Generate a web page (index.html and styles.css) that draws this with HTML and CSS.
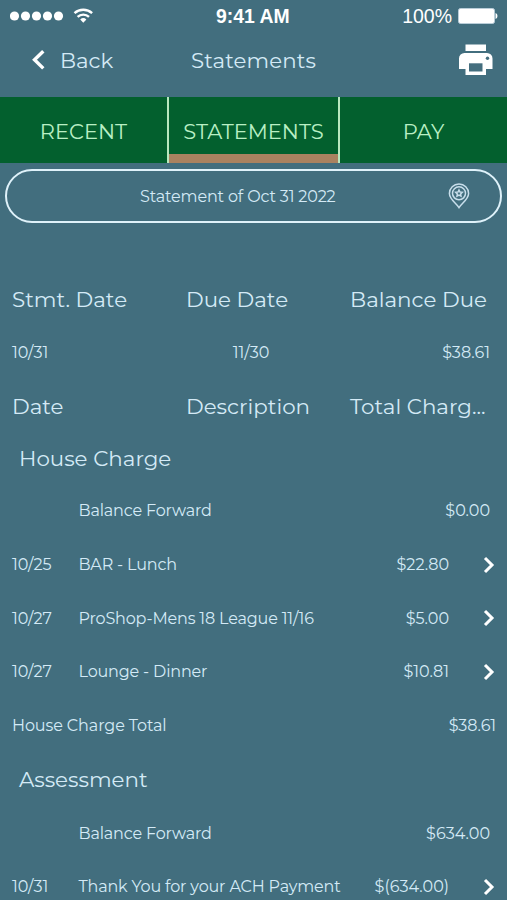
FILE: index.html
```html
<!DOCTYPE html>
<html lang="en">
<head>
  <meta charset="UTF-8">
  <meta name="viewport" content="width=device-width, initial-scale=1.0">
  <title>Statements</title>
  <link rel="stylesheet" href="styles.css">
</head>
<body>

  <div class="status-bar">
    <div class="signal">
      <svg width="86" height="16" viewBox="0 0 86 16" fill="#fff">
        <circle cx="4.5" cy="8" r="4.6"/>
        <circle cx="15.5" cy="8" r="4.6"/>
        <circle cx="26.5" cy="8" r="4.6"/>
        <circle cx="37.5" cy="8" r="4.6"/>
        <circle cx="48.5" cy="8" r="4.6"/>
        <g fill="none" stroke="#fff" stroke-width="2.4">
          <path d="M64.5 5.2a13 13 0 0 1 17.6 0"/>
          <path d="M67.6 8.9a8.2 8.2 0 0 1 11.4 0"/>
        </g>
        <path d="M70.2 11.4a4.6 4.6 0 0 1 6.2 0L73.3 14.8z"/>
      </svg>
    </div>
    <div class="clock">9:41 AM</div>
    <div class="battery">
      <span>100%</span>
      <svg width="40" height="16" viewBox="0 0 40 16">
        <rect x="0.5" y="0.5" width="36" height="15" rx="2" fill="#fff" stroke="#b9cdd8"/>
        <path d="M37.5 5q2 .6 2 3t-2 3z" fill="#fff"/>
      </svg>
    </div>
  </div>

  <div class="nav-bar">
    <a class="back">
      <svg width="14" height="22" viewBox="0 0 14 22" fill="none" stroke="#fff" stroke-width="3.4"><path d="M12.300 2.200L3.500 10.800l8.800 8.600"/></svg>
      <span>Back</span>
    </a>
    <h1 class="title">Statements</h1>
    <svg class="print" width="36" height="32" viewBox="0 0 36 32">
      <rect x="7.500" y="0.500" width="20.500" height="6.500" fill="#fff"/>
      <path d="M6.500 9h22.500a5.500 5.500 0 0 1 5.500 5.500V25h-6.500v6H7.500v-6H1V14.500A5.500 5.500 0 0 1 6.500 9z" fill="#fff"/>
      <path d="M11 19.300h13.500v8.200H11z" fill="#446e7e"/>
      <circle cx="29.500" cy="14.200" r="1.700" fill="#446e7e"/>
    </svg>
  </div>

  <div class="tabs">
    <div class="tab">RECENT</div>
    <div class="tab active">STATEMENTS</div>
    <div class="tab">PAY</div>
  </div>

  <div class="picker">
    <span>Statement of Oct 31 2022</span>
    <svg width="22" height="26" viewBox="0 0 22 26" fill="none" stroke="#c8deeb" stroke-width="1.5">
      <path d="M11 24.600C8.500 20.500 1.400 16.200 1.400 10.500a9.600 9.600 0 0 1 19.200 0C20.600 16.200 13.500 20.500 11 24.600z"/>
      <circle cx="11" cy="10.300" r="6.500"/>
      <path d="M11 7l1 2 2.300.3-1.700 1.600.4 2.300-2-1.100-2 1.100.4-2.300-1.700-1.600 2.300-.3z"/>
    </svg>
  </div>

  <div class="statement">
    <div class="row head">
      <span>Stmt. Date</span>
      <span>Due Date</span>
      <span>Balance Due</span>
    </div>
    <div class="row summary">
      <span>10/31</span>
      <span class="due">11/30</span>
      <span class="amount">$38.61</span>
    </div>
    <div class="row head">
      <span>Date</span>
      <span>Description</span>
      <span>Total Charg...</span>
    </div>

    <h2 class="section first">House Charge</h2>
    <div class="row item">
      <span class="desc">Balance Forward</span>
      <span class="amount">$0.00</span>
    </div>
    <div class="row item link">
      <span>10/25</span>
      <span class="desc">BAR - Lunch</span>
      <span class="amount">$22.80</span>
      <svg class="arrow" width="12" height="18" viewBox="0 0 12 18"><path d="M2 2l7 7-7 7"/></svg>
    </div>
    <div class="row item link">
      <span>10/27</span>
      <span class="desc">ProShop-Mens 18 League 11/16</span>
      <span class="amount">$5.00</span>
      <svg class="arrow" width="12" height="18" viewBox="0 0 12 18"><path d="M2 2l7 7-7 7"/></svg>
    </div>
    <div class="row item link">
      <span>10/27</span>
      <span class="desc">Lounge - Dinner</span>
      <span class="amount">$10.81</span>
      <svg class="arrow" width="12" height="18" viewBox="0 0 12 18"><path d="M2 2l7 7-7 7"/></svg>
    </div>
    <div class="row total">
      <span>House Charge Total</span>
      <span>$38.61</span>
    </div>

    <h2 class="section">Assessment</h2>
    <div class="row item">
      <span class="desc">Balance Forward</span>
      <span class="amount">$634.00</span>
    </div>
    <div class="row item link">
      <span>10/31</span>
      <span class="desc">Thank You for your ACH Payment</span>
      <span class="amount">$(634.00)</span>
      <svg class="arrow" width="12" height="18" viewBox="0 0 12 18"><path d="M2 2l7 7-7 7"/></svg>
    </div>
  </div>

</body>
</html>
```
FILE: styles.css
```css
* {
  box-sizing: border-box;
}
body {
  margin: 0;
  height: 900px;
  overflow: hidden;
  background-color: #426e7e;
  color: #d4eaf6;
  font-family: Montserrat, Inter, sans-serif;
  font-size: 16px;
}
svg {
  display: block;
  flex: none;
}
h1, h2 {
  margin: 0;
  font-weight: 400;
}
.status-bar {
  display: grid;
  grid-template-columns: 1fr 76px 1fr;
  align-items: center;
  height: 32px;
  padding: 0 9px 0 10px;
  color: #fff;
  font-family: "Liberation Sans", Arial, sans-serif;
  font-size: 19.5px;
}
.clock {
  font-size: 19.4px;
  font-weight: bold;
  white-space: nowrap;
}
.battery {
  display: flex;
  align-items: center;
  justify-content: flex-end;
  gap: 6px;
}
.nav-bar {
  display: grid;
  grid-template-columns: 160px 1fr 36px;
  align-items: center;
  height: 65px;
  padding: 0 13px 9px 31px;
  font-size: 21.3px;
}
.back {
  display: flex;
  align-items: center;
  gap: 15px;
}
.title {
  font-size: 21.3px;
  letter-spacing: 0.1px;
}
.tabs {
  display: grid;
  grid-template-columns: 167px 173px 1fr;
  height: 66px;
  background-color: #03602e;
  color: #b9efc4;
  font-size: 21px;
}
.tab {
  display: flex;
  align-items: center;
  justify-content: center;
  padding-top: 2px;
}
.active {
  border-left: 2px solid #b9e8bf;
  border-right: 2px solid #b9e8bf;
  background: linear-gradient(#a98260, #a98260) bottom / 100% 9px no-repeat;
}
.picker {
  display: flex;
  align-items: center;
  justify-content: space-between;
  height: 54px;
  margin: 6px 5px 0;
  padding: 0 30px 0 133px;
  border: 2.5px solid #dff2fa;
  border-radius: 27px;
  letter-spacing: -0.15px;
}
.statement {
  padding: 49px 11px 0 12px;
}
.row {
  display: flex;
  align-items: center;
  height: 53.7px;
  white-space: nowrap;
}
.head {
  display: grid;
  grid-template-columns: 174px 164px 1fr;
  font-size: 21.4px;
}
.summary {
  display: grid;
  grid-template-columns: 174px 130px 1fr;
  padding-right: 6px;
}
.due {
  text-align: center;
}
.summary .amount {
  text-align: right;
}
.section {
  display: flex;
  align-items: center;
  height: 53.7px;
  padding-left: 7px;
  font-size: 21.4px;
}
.first {
  height: 51px;
  padding-bottom: 2px;
}
.item {
  display: grid;
  grid-template-columns: 66.5px 1fr auto;
  padding-right: 6px;
}
.item .desc {
  grid-column: 2;
  letter-spacing: -0.16px;
}
.link {
  grid-template-columns: 66.5px 1fr auto 12px;
  padding-right: 1px;
}
.link .amount {
  margin-right: 34px;
}
.arrow {
  fill: none;
  stroke: #fff;
  stroke-width: 3;
}
.total {
  justify-content: space-between;
  letter-spacing: -0.1px;
}
```
